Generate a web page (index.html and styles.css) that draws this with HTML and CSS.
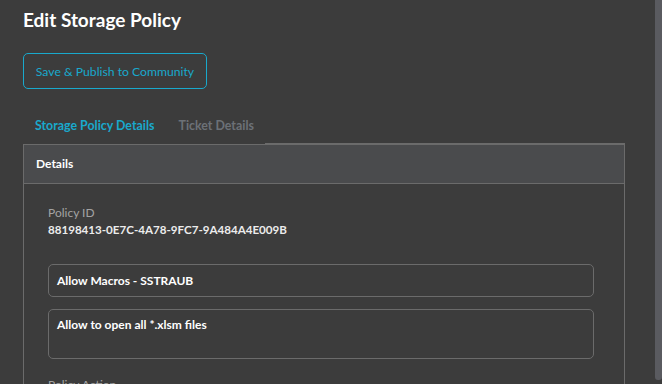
FILE: index.html
```html
<!DOCTYPE html>
<html lang="en">
<head>
  <meta charset="UTF-8">
  <title>Edit Storage Policy</title>
  <link rel="stylesheet" href="styles.css">
</head>
<body>
  <div class="page">
    <h1 class="page-title">Edit Storage Policy</h1>

    <button class="btn btn-outline">Save &amp; Publish to Community</button>

    <div class="tabs">
      <div class="tab-list">
        <span class="tab tab-active">Storage Policy Details</span>
        <span class="tab">Ticket Details</span>
      </div>
      <div class="tab-rest"></div>
    </div>

    <div class="panel">
      <div class="panel-header">Details</div>
      <div class="panel-body">
        <div class="field">
          <div class="field-label">Policy ID</div>
          <div class="field-value">88198413-0E7C-4A78-9FC7-9A484A4E009B</div>
        </div>
        <div class="input">Allow Macros - SSTRAUB</div>
        <div class="input input-area">Allow to open all *.xlsm files</div>
        <div class="field-label">Policy Action</div>
      </div>
    </div>
  </div>
  <div class="scrollbar"></div>
</body>
</html>
```

FILE: styles.css
```css
:root {
  --bg: #3c3c3c;
  --header-bg: #4a4b4d;
  --border: #6b6b6b;
  --cyan: #19a9cc;
  --text: #ffffff;
  --muted: #a3a3a3;
  --tab-muted: #6c7177;
}

* {
  margin: 0;
  padding: 0;
  box-sizing: border-box;
}

body {
  background: var(--bg);
  font-family: Lato, "Open Sans", sans-serif;
  color: var(--text);
  height: 384px;
  overflow: hidden;
}

.page {
  width: 625px;
  padding: 9px 0 0 23px;
}

.page-title {
  font-size: 19px;
  font-weight: 700;
  line-height: 22px;
  margin-bottom: 22px;
}

.btn {
  font-family: inherit;
  cursor: pointer;
  background: transparent;
}

.btn-outline {
  height: 36px;
  width: 184px;
  border: 1px solid var(--cyan);
  border-radius: 5px;
  color: var(--cyan);
  font-size: 12.2px;
}

.tabs {
  display: flex;
  margin-top: 26px;
  height: 29px;
}

.tab-list {
  width: 242px;
  display: flex;
  gap: 24px;
  padding: 3px 0 0 12px;
}

.tab {
  font-size: 12.4px;
  font-weight: 700;
  color: var(--tab-muted);
}

.tab-active {
  color: var(--cyan);
}

.tab-rest {
  flex: 1;
  border-bottom: 1px solid var(--border);
}

.panel {
  border: 1px solid var(--border);
  height: 300px;
}

.panel-header {
  background: var(--header-bg);
  height: 39px;
  border-bottom: 1px solid var(--border);
  padding: 0 12px;
  font-size: 12px;
  font-weight: 700;
  line-height: 38px;
}

.panel-body {
  padding: 20px 30px 0 24px;
}

.field {
  margin-bottom: 26px;
}

.field-label {
  font-size: 12px;
  color: var(--muted);
  line-height: 17px;
}

.field-value {
  font-size: 11.6px;
  font-weight: 700;
  line-height: 17px;
  color: #ececec;
}

.input {
  height: 33px;
  border: 1px solid var(--border);
  border-radius: 5px;
  padding: 0 8px;
  font-size: 12px;
  font-weight: 700;
  line-height: 31px;
  margin-bottom: 12px;
}

.input-area {
  height: 50px;
  line-height: 17px;
  padding-top: 6px;
  margin-bottom: 17px;
}

.scrollbar {
  position: fixed;
  top: 0;
  right: 0;
  width: 7px;
  height: 380px;
  background: #5a5b60;
  border-radius: 0 0 3px 3px;
}
```
